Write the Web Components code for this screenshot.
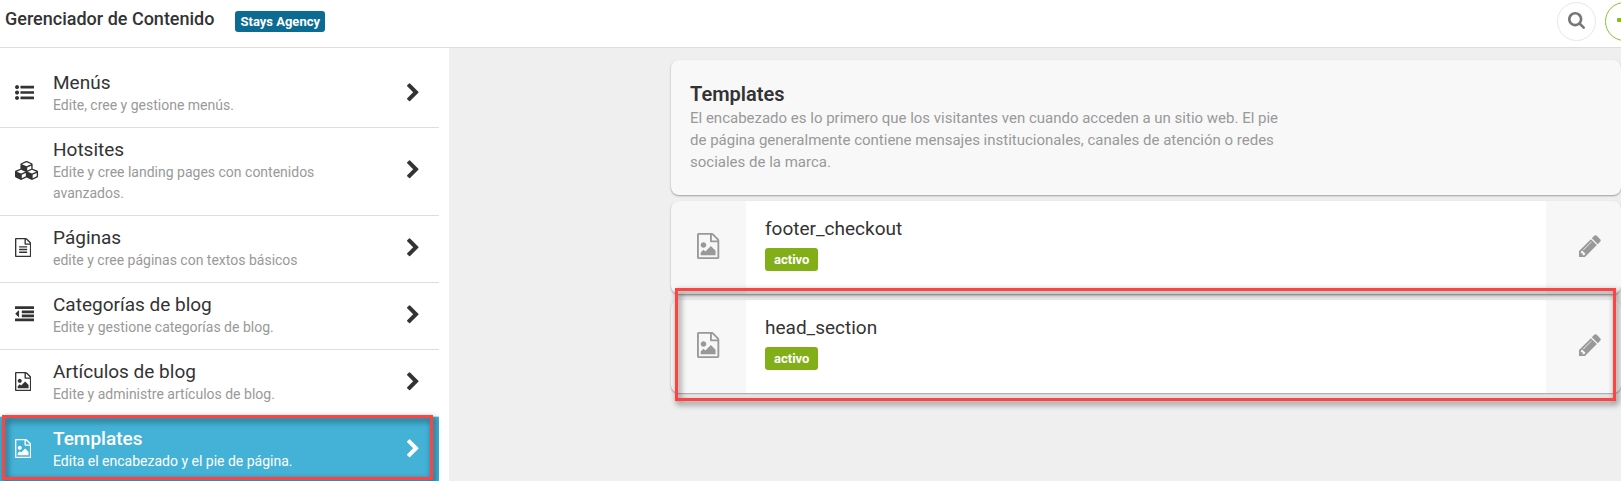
<!DOCTYPE html>
<html lang="es">
<head>
<meta charset="utf-8">
<meta name="viewport" content="width=device-width, initial-scale=1">
<title>Gerenciador de Contenido</title>
<style>
    body {
        margin: 0;
        font-family: Roboto, "Liberation Sans", sans-serif;
        color: #333;
        background: #efefef;
    }
</style>
</head>
<body>
<content-manager>
    <top-bar slot="header" heading="Gerenciador de Contenido" agency="Stays Agency"></top-bar>

    <nav-item slot="nav" icon="list" heading="Menús">Edite, cree y gestione menús.</nav-item>
    <nav-item slot="nav" icon="cubes" heading="Hotsites">Edite y cree landing pages con contenidos avanzados.</nav-item>
    <nav-item slot="nav" icon="text" heading="Páginas">edite y cree páginas con textos básicos</nav-item>
    <nav-item slot="nav" icon="outdent" heading="Categorías de blog">Edite y gestione categorías de blog.</nav-item>
    <nav-item slot="nav" icon="image" heading="Artículos de blog">Edite y administre artículos de blog.</nav-item>
    <nav-item slot="nav" icon="image" heading="Templates" active>Edita el encabezado y el pie de página.</nav-item>

    <intro-card heading="Templates">El encabezado es lo primero que los visitantes ven cuando acceden a un sitio web. El pie de página generalmente contiene mensajes institucionales, canales de atención o redes sociales de la marca.</intro-card>
    <template-row name="footer_checkout" status="activo"></template-row>
    <template-row name="head_section" status="activo" marked></template-row>
</content-manager>

<script>
// Outline shared by both document icons
const FILE = 'M1596 380q28 28 48 76t20 88v1152q0 40-28 68t-68 28h-1344q-40 0-68-28t-28-68v-1600q0-40 28-68t68-28h896q40 0 88 20t76 48zm-444-244v376h376q-10-29-22-41l-313-313q-12-12-41-22zm384 1528v-1024h-416q-40 0-68-28t-28-68v-416h-768v1536h1280z';
const BAR = 'h1216q13 0 22.5 9.5t9.5 22.5v192q0 13-9.5 22.5t-22.5 9.5h-1216q-13 0-22.5-9.5t-9.5-22.5v-192q0-13 9.5-22.5t22.5-9.5z';
const WIDE = 'h1728q13 0 22.5 9.5t9.5 22.5v192q0 13-9.5 22.5t-22.5 9.5h-1728q-13 0-22.5-9.5t-9.5-22.5v-192q0-13 9.5-22.5t22.5-9.5z';
const MID = 'h1088q13 0 22.5 9.5t9.5 22.5v192q0 13-9.5 22.5t-22.5 9.5h-1088q-13 0-22.5-9.5t-9.5-22.5v-192q0-13 9.5-22.5t22.5-9.5z';
const DOT = 'q0 80-56 136t-136 56-136-56-56-136 56-136 136-56 136 56 56 136z';
const LINE = 'h704q14 0 23 9t9 23v64q0 14-9 23t-23 9h-704q-14 0-23-9t-9-23v-64q0-14 9-23t23-9z';

const ICONS = {
    list: ['0 0 1792 1792', `M384 384${DOT}M384 896${DOT}M384 1408${DOT}M544 256${BAR}M544 768${BAR}M544 1280${BAR}`],
    cubes: ['0 0 2304 1792', 'M640 1632l384-192v-314l-384 164v342zm-64-454l404-173-404-173-404 173zm1088 454l384-192v-314l-384 164v342zm-64-454l404-173-404-173-404 173zm-448-293l384-165v-266l-384 164v267zm-64-379l441-189-441-189-441 189zm1088 518v416q0 36-19 67t-52 47l-448 224q-25 14-57 14t-57-14l-448-224q-4-2-7-4-2 2-7 4l-448 224q-25 14-57 14t-57-14l-448-224q-33-16-52-47t-19-67v-416q0-38 21.5-70t56.5-48l434-186v-400q0-38 21.5-70t56.5-48l448-192q23-10 50-10t50 10l448 192q35 16 56.5 48t21.5 70v400l434 186q36 16 57 48t21 70z'],
    text: ['128 0 1536 1792', `${FILE}M544 768${LINE}M544 1024${LINE}M544 1280${LINE}`],
    image: ['128 0 1536 1792', `${FILE}M1408 1216v320h-1024v-192l192-192 128 128 384-384zm-832-192q-80 0-136-56t-56-136 56-136 136-56 136 56 56 136-56 136-136 56z`],
    outdent: ['0 0 1792 1792', `M384 544v576q0 13-9.5 22.5t-22.5 9.5q-14 0-23-9l-288-288q-9-9-9-23t9-23l288-288q9-9 23-9 13 0 22.5 9.5t9.5 22.5zM32 128${WIDE}M672 512${MID}M672 896${MID}M32 1280${WIDE}`],
    chevron: ['346 0 1036 1792', 'M1363 877l-742 742q-19 19-45 19t-45-19l-166-166q-19-19-19-45t19-45l531-531-531-531q-19-19-19-45t19-45l166-166q19-19 45-19t45 19l742 742q19 19 19 45t-19 45z'],
    pencil: ['128 128 1536 1536', 'M491 1536l91-91-235-235-91 91v107h128v128h107zm523-928q0-22-22-22-10 0-17 7l-542 542q-7 7-7 17 0 22 22 22 10 0 17-7l542-542q7-7 7-17zm-54-192l416 416-832 832h-416v-416zm683 96q0 53-37 90l-166 166-416-416 166-165q36-38 90-38 53 0 91 38l235 234q37 39 37 91z'],
    search: ['64 128 1664 1664', 'M1216 832q0-185-131.5-316.5t-316.5-131.5-316.5 131.5-131.5 316.5 131.5 316.5 316.5 131.5 316.5-131.5 131.5-316.5zm512 832q0 52-38 90t-90 38q-54 0-90-38l-343-342q-179 124-399 124-143 0-273.5-55.5t-225-150-150-225-55.5-273.5 55.5-273.5 150-225 225-150 273.5-55.5 273.5 55.5 225 150 150 225 55.5 273.5q0 220-124 399l343 343q37 37 37 90z'],
    plus: ['0 0 16 16', 'M1 6h5V1q0-1 1-1h2q1 0 1 1v5h5q1 0 1 1v2q0 1-1 1h-5v5q0 1-1 1H7q-1 0-1-1v-5H1q-1 0-1-1V7q0-1 1-1z']
};

class UiIcon extends HTMLElement {
    constructor() {
        super();
        this.attachShadow({ mode: 'open' });
    }

    connectedCallback() {
        const [box, path] = ICONS[this.getAttribute('name')];
        this.shadowRoot.innerHTML = `
        <style>
            :host { display: block; height: 19px; flex: none; }
            svg { display: block; height: 100%; fill: currentColor; }
        </style>
        <svg viewBox="${box}" aria-hidden="true"><path d="${path}"/></svg>
        `;
    }
}

// Small coloured label
class UiBadge extends HTMLElement {
    constructor() {
        super();
        this.attachShadow({ mode: 'open' });
        this.shadowRoot.innerHTML = `
        <style>
            :host {
                display: block;
                width: fit-content;
                padding: 0 5px;
                border-radius: 3px;
                background: var(--badge-color, #82ae18);
                color: #fff;
                font-size: 13px;
                font-weight: 700;
                line-height: 21px;
                white-space: nowrap;
            }
        </style>
        <slot></slot>
        `;
    }
}

// Red frame laid over whatever element contains it
class MarkFrame extends HTMLElement {
    constructor() {
        super();
        this.attachShadow({ mode: 'open' });
        this.shadowRoot.innerHTML = `
        <style>
            :host {
                position: absolute;
                z-index: 1;
                box-sizing: border-box;
                border: 3px solid #ff4343;
                filter: drop-shadow(2px 3px 3px rgba(0, 0, 0, 0.6));
                pointer-events: none;
            }
        </style>
        `;
    }
}

class TopBar extends HTMLElement {
    constructor() {
        super();
        this.attachShadow({ mode: 'open' });
    }

    connectedCallback() {
        this.shadowRoot.innerHTML = `
        <style>
            :host { display: block; }
            header {
                display: flex;
                align-items: flex-start;
                gap: 21px;
                box-sizing: border-box;
                height: 48px;
                padding-left: 5px;
                border-bottom: 1px solid #ddd;
                background: #fff;
                overflow: hidden;
            }
            h1 { margin: 8px 0 0; font-size: 18px; font-weight: 500; line-height: 22px; }
            ui-badge { --badge-color: #0c6b92; margin-top: 11px; }

            /* the last action runs past the right edge */
            .actions { display: flex; gap: 9px; margin: 2px -23px 0 auto; }
            button {
                display: flex;
                align-items: center;
                justify-content: center;
                width: 39px;
                height: 39px;
                padding: 0 0 2px;
                border: 1px solid #e7e7e7;
                border-radius: 50%;
                background: #fff;
                color: #777;
                cursor: pointer;
            }
            .search ui-icon { height: 17px; }
            .add { padding-bottom: 4px; border-color: #8ac32a; color: #84bd1c; }
            .add ui-icon { height: 16px; }
        </style>
        <header>
            <h1>${this.getAttribute('heading')}</h1>
            <ui-badge>${this.getAttribute('agency')}</ui-badge>
            <div class="actions">
                <button class="search" aria-label="Buscar"><ui-icon name="search"></ui-icon></button>
                <button class="add" aria-label="Agregar"><ui-icon name="plus"></ui-icon></button>
            </div>
        </header>
        `;
    }
}

class NavItem extends HTMLElement {
    constructor() {
        super();
        this.attachShadow({ mode: 'open' });
    }

    connectedCallback() {
        const active = this.hasAttribute('active');
        this.shadowRoot.innerHTML = `
        <style>
            :host { display: block; position: relative; border-bottom: 1px solid #ddd; }
            a {
                display: grid;
                grid-template-columns: 24px 1fr 12px;
                column-gap: 14px;
                align-items: center;
                padding: 10px 20px 11px 15px;
                color: #333;
                text-decoration: none;
            }
            ui-icon { margin-bottom: 2px; }
            .title { display: block; font-size: 19px; line-height: 24px; }
            .text { display: block; max-width: 280px; color: #999; font-size: 14px; line-height: 21px; }
            .go { height: 20px; }

            :host([active]) a { background: #44b2d6; color: #fff; }
            :host([active]) .title { font-weight: 500; }
            :host([active]) .text { color: #fff; }
            mark-frame { inset: -2px 6px 3px 2px; }
        </style>
        <a href="#" ${active ? 'aria-current="page"' : ''}>
            <ui-icon name="${this.getAttribute('icon')}"></ui-icon>
            <span>
                <span class="title">${this.getAttribute('heading')}</span>
                <span class="text"><slot></slot></span>
            </span>
            <ui-icon class="go" name="chevron"></ui-icon>
        </a>
        ${active ? '<mark-frame></mark-frame>' : ''}
        `;
    }
}

class IntroCard extends HTMLElement {
    constructor() {
        super();
        this.attachShadow({ mode: 'open' });
    }

    connectedCallback() {
        this.shadowRoot.innerHTML = `
        <style>
            :host {
                display: block;
                padding: 22px 19px;
                border-radius: 8px;
                background: #f8f8f8;
                box-shadow: 0 1px 2px rgba(0, 0, 0, 0.35);
            }
            h2 { margin: 0; font-size: 20px; font-weight: 600; line-height: 25px; }
            p { margin: 0; max-width: 600px; color: #999; font-size: 15px; line-height: 22px; }
        </style>
        <h2>${this.getAttribute('heading')}</h2>
        <p><slot></slot></p>
        `;
    }
}

class TemplateRow extends HTMLElement {
    constructor() {
        super();
        this.attachShadow({ mode: 'open' });
    }

    connectedCallback() {
        const name = this.getAttribute('name');
        this.shadowRoot.innerHTML = `
        <style>
            :host { display: block; position: relative; }
            article {
                display: grid;
                grid-template-columns: 75px 1fr 75px;
                border-radius: 8px;
                background: #f7f7f7;
                box-shadow: 0 1px 2px rgba(0, 0, 0, 0.35);
            }
            .file, button { display: flex; align-items: center; color: #999; }
            .file { justify-content: center; padding-bottom: 4px; }
            .file ui-icon { height: 26px; }
            .body { padding: 15px 19px 23px; background: #fff; }
            h3 { margin: 0 0 6px; font-size: 19px; font-weight: 400; line-height: 26px; }
            ui-badge { padding: 1px 9px; }
            button {
                justify-content: flex-end;
                padding: 0 20px 4px 0;
                border: 0;
                background: none;
                cursor: pointer;
            }
            button ui-icon { height: 22px; }
            mark-frame { inset: -12px 5px -8px 4px; }
        </style>
        <article>
            <div class="file"><ui-icon name="image"></ui-icon></div>
            <div class="body">
                <h3>${name}</h3>
                <ui-badge>${this.getAttribute('status')}</ui-badge>
            </div>
            <button aria-label="Editar ${name}"><ui-icon name="pencil"></ui-icon></button>
        </article>
        ${this.hasAttribute('marked') ? '<mark-frame></mark-frame>' : ''}
        `;
    }
}

// Page shell: header, sidebar and content column
class ContentManager extends HTMLElement {
    constructor() {
        super();
        this.attachShadow({ mode: 'open' });
        this.shadowRoot.innerHTML = `
        <style>
            :host { display: flex; flex-direction: column; height: 100vh; overflow: hidden; }
            .columns { display: flex; flex: 1; min-height: 0; }
            nav {
                flex: none;
                box-sizing: border-box;
                width: 449px;
                padding: 13px 10px 0 0;
                background: #fff;
                overflow: hidden;
            }
            main {
                display: flex;
                flex: 1;
                flex-direction: column;
                gap: 6px;
                min-width: 0;
                padding: 12px 0 0 222px;
            }
        </style>
        <slot name="header"></slot>
        <div class="columns">
            <nav><slot name="nav"></slot></nav>
            <main><slot></slot></main>
        </div>
        `;
    }
}

customElements.define('ui-icon', UiIcon);
customElements.define('ui-badge', UiBadge);
customElements.define('mark-frame', MarkFrame);
customElements.define('top-bar', TopBar);
customElements.define('nav-item', NavItem);
customElements.define('intro-card', IntroCard);
customElements.define('template-row', TemplateRow);
customElements.define('content-manager', ContentManager);
</script>
</body>
</html>
